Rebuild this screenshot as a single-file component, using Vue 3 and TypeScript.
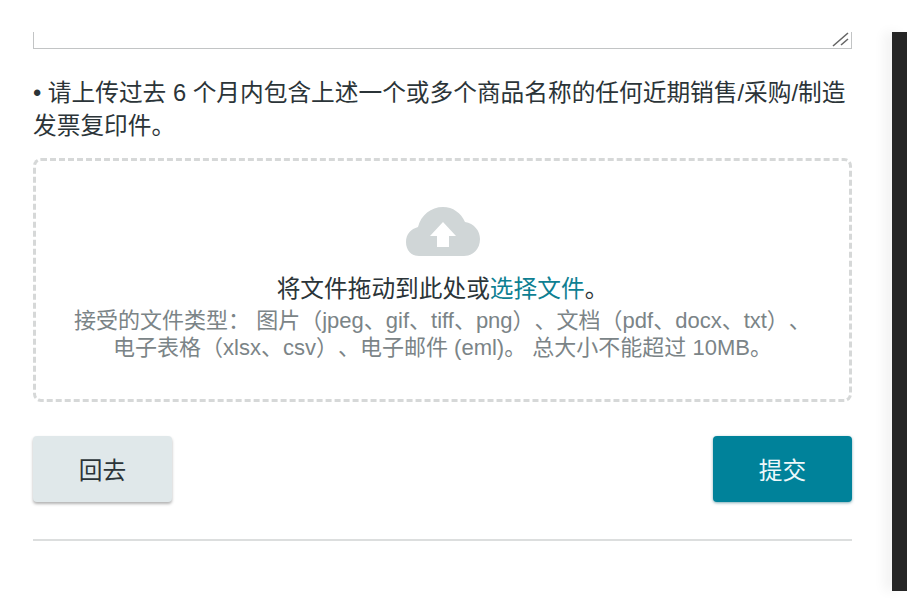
<script setup lang="ts">
const fileTypes: string = '接受的文件类型： 图片（jpeg、gif、tiff、png）、文档（pdf、docx、txt）、'
const fileLimits: string = '电子表格（xlsx、csv）、电子邮件 (eml)。 总大小不能超过 10MB。'
</script>

<template>
  <div class="page">
    <main class="form">
      <div class="textarea">
        <svg class="grip" width="18" height="15" viewBox="0 0 18 15">
          <path d="M1 14 L16 1 M9 13 L16 7" stroke="#666" stroke-width="1.6" fill="none" />
        </svg>
      </div>
      <p class="note">• 请上传过去 6 个月内包含上述一个或多个商品名称的任何近期销售/采购/制造发票复印件。</p>
      <section class="drop">
        <svg class="cloud" width="74" height="49" viewBox="0 0 74 49">
          <path
            fill="#d0d6d7"
            d="M13 49 C5 49 0 43 0 35 C0 27 5 22 12 20 C15 8 25 0 37 0 C47 0 55 6 59 15 C68 16 74 24 74 32 C74 42 67 49 58 49 Z"
          />
          <path fill="#fff" d="M37 15 L50 29 H43 V40 H31 V29 H24 Z" />
        </svg>
        <div class="prompt">将文件拖动到此处或<a class="link">选择文件</a>。</div>
        <div class="hint">{{ fileTypes }}<br />{{ fileLimits }}</div>
      </section>
      <div class="actions">
        <button class="btn back" type="button">回去</button>
        <button class="btn submit" type="button">提交</button>
      </div>
      <hr class="rule" />
    </main>
    <aside class="rail"></aside>
  </div>
</template>

<style>
html,
body {
  margin: 0;
  background: #fff;
}
</style>

<style scoped>
.page {
  width: 917px;
  height: 599px;
  box-sizing: border-box;
  padding: 32px 10px 8px 33px;
  display: flex;
  overflow: hidden;
  background: #fff;
  font-family: "Liberation Sans", "Noto Sans CJK SC", sans-serif;
  color: #2b3438;
  text-spacing-trim: space-all;
}
.form {
  width: 819px;
  flex: none;
}
.textarea {
  position: relative;
  height: 16px;
  border: 1px solid #c2c4c5;
  border-top: 0;
}
.grip {
  position: absolute;
  right: 1px;
  bottom: 1px;
}
.note {
  margin: 28px 0 15px;
  font-size: 23.7px;
  line-height: 33px;
}
.drop {
  box-sizing: border-box;
  height: 244px;
  border: 3px dashed #d6d8d8;
  border-radius: 8px;
  padding: 46px 20px 0;
  text-align: center;
}
.cloud {
  display: block;
  margin: 0 auto;
}
.prompt {
  margin-top: 17px;
  font-size: 23.7px;
  line-height: 33px;
  color: #2b3438;
}
.link {
  color: #0e7f92;
}
.hint {
  margin-top: 1px;
  font-size: 22px;
  line-height: 27px;
  color: #7b8487;
  white-space: nowrap;
}
.actions {
  display: flex;
  justify-content: space-between;
  margin-top: 34px;
}
.btn {
  width: 139px;
  height: 66px;
  border: 0;
  border-radius: 4px;
  font: inherit;
  font-size: 23.7px;
}
.back {
  background: #e0e8ea;
  color: #2b3438;
  box-shadow: 0 2px 3px rgba(0, 0, 0, 0.3);
}
.submit {
  background: #00829a;
  color: #eef8fa;
  box-shadow: 0 1px 3px rgba(0, 90, 110, 0.5);
}
.rule {
  margin: 37px 0 0;
  border: 0;
  height: 2px;
  background: #dcdede;
}
.rail {
  width: 15px;
  flex: none;
  margin-left: 40px;
  background: #262626;
  box-shadow: -8px 0 12px rgba(0, 0, 0, 0.05);
}
</style>
